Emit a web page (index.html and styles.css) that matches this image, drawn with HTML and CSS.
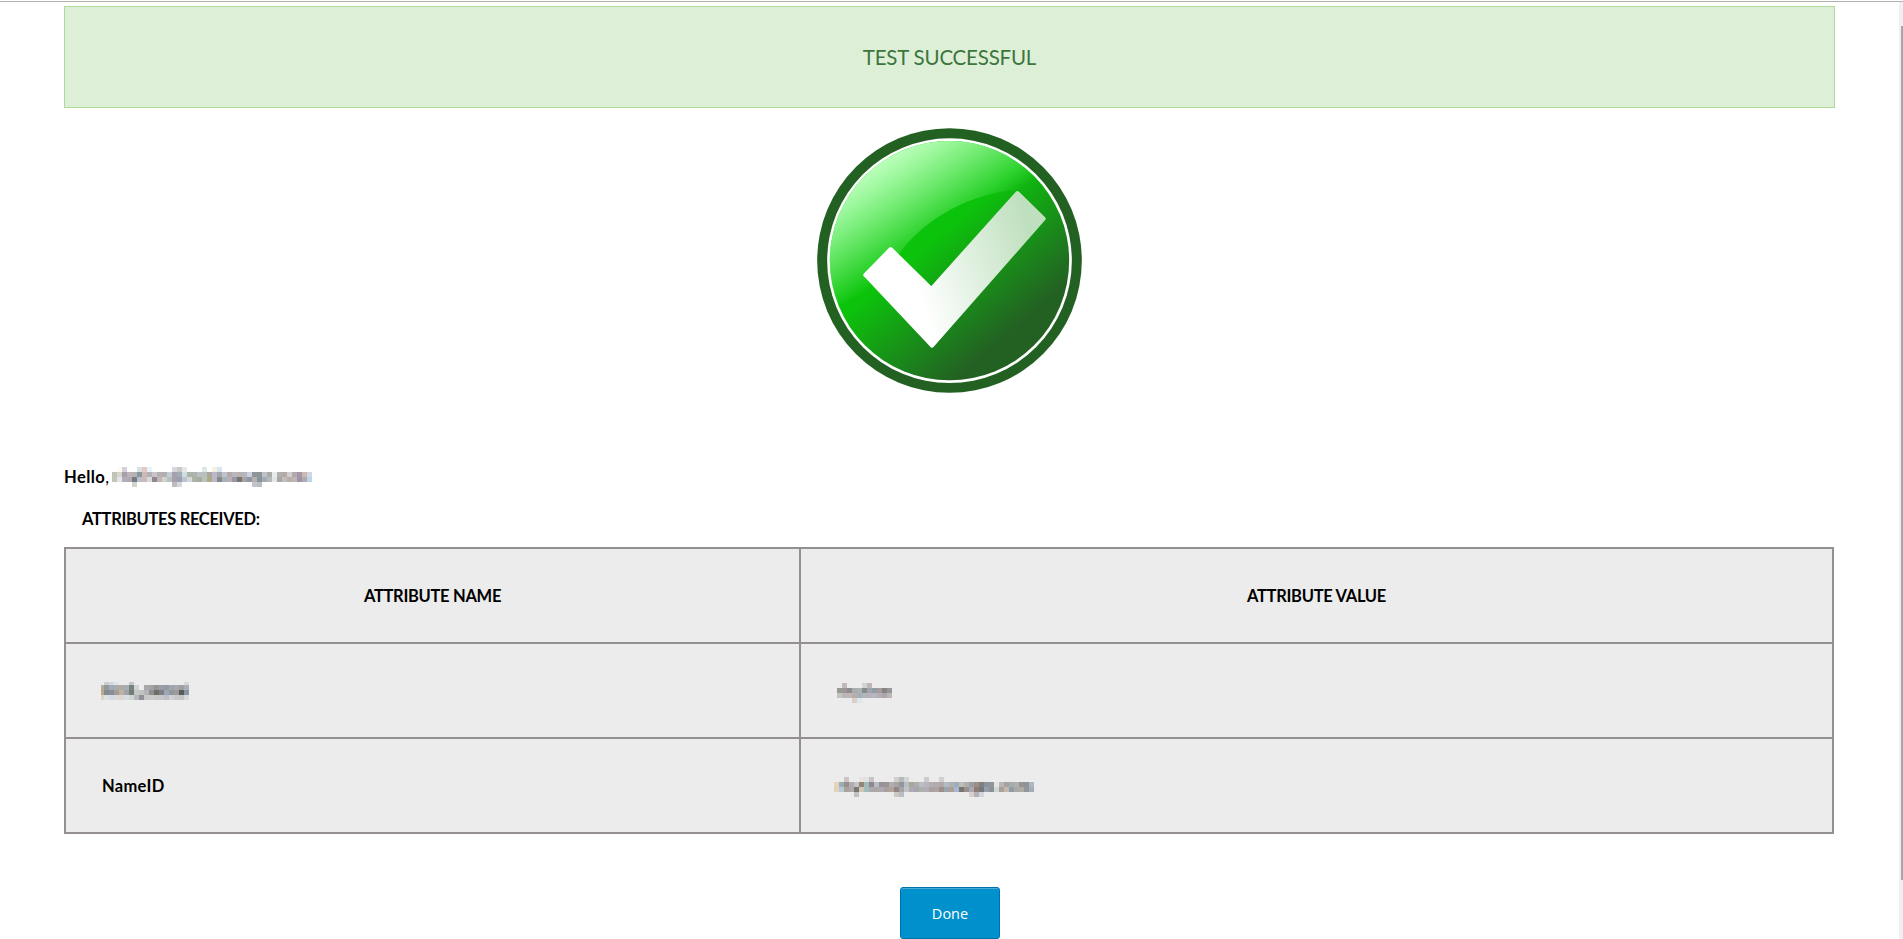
FILE: index.html
```html
<!DOCTYPE html>
<html lang="en">
<head>
<meta charset="utf-8">
<title>Test Configuration</title>
<link rel="stylesheet" href="styles.css">
</head>
<body>
<div class="window">
  <main class="content">
    <div class="banner"><span class="banner-text">TEST SUCCESSFUL</span></div>
    <svg class="badge" viewBox="51 53 795 795" aria-hidden="true">
      <defs>
        <linearGradient id="base" gradientUnits="userSpaceOnUse" x1="300" y1="471" x2="535" y2="746">
          <stop offset="0" stop-color="#0cc30c"/><stop offset="1" stop-color="#236123"/>
        </linearGradient>
        <linearGradient id="gloss" gradientUnits="userSpaceOnUse" x1="200" y1="181" x2="365" y2="430">
          <stop offset="0" stop-color="#fff" stop-opacity=".62"/><stop offset="1" stop-color="#fff" stop-opacity="0"/>
        </linearGradient>
        <linearGradient id="lift" gradientUnits="userSpaceOnUse" x1="200" y1="181" x2="370" y2="438">
          <stop offset="0" stop-color="#50ff50"/><stop offset="1" stop-color="#30f030" stop-opacity="0"/>
        </linearGradient>
        <linearGradient id="tick" gradientUnits="userSpaceOnUse" x1="345" y1="520" x2="700" y2="400">
          <stop offset="0" stop-color="#fff"/><stop offset="1" stop-color="#bfe0bf"/>
        </linearGradient>
        <clipPath id="disc"><circle cx="448.500" cy="451" r="359"/></clipPath>
      </defs>
      <circle cx="448.500" cy="450.500" r="397" fill="#236123"/>
      <circle cx="448.500" cy="451" r="367" fill="#fff"/>
      <circle cx="448.500" cy="451" r="359" fill="url(#base)"/>
      <g clip-path="url(#disc)">
        <path fill="url(#lift)" d="M60 60H760V234C560 224 400 300 305 420C250 490 200 570 60 600Z"/>
        <path fill="url(#gloss)" d="M60 60H760V234C560 224 400 300 305 420C250 490 200 570 60 600Z"/>
      </g>
      <path fill="url(#tick)" stroke="url(#tick)" stroke-width="12" stroke-linejoin="round" d="M196 494L272 416L394 536L652 248L731 325L396 706Z"/>
    </svg>
    <p class="hello"><span class="hello-text"><b>Hello</b>,</span><svg class="mosaic" data-name="user"></svg></p>
    <p class="caption"><span class="caption-text">ATTRIBUTES RECEIVED:</span></p>
    <div class="table">
      <div class="cell head"><span class="head-name">ATTRIBUTE NAME</span></div>
      <div class="cell head"><span class="head-value">ATTRIBUTE VALUE</span></div>
      <div class="cell"><svg class="mosaic key" data-name="first"></svg></div>
      <div class="cell"><svg class="mosaic short" data-name="value"></svg></div>
      <div class="cell"><span class="name-id">NameID</span></div>
      <div class="cell"><svg class="mosaic long" data-name="email"></svg></div>
    </div>
    <button class="done">Done</button>
  </main>
  <div class="scrollbar"><div class="thumb"></div></div>
</div>
<script src="mosaic.js"></script>
</body>
</html>
```
FILE: styles.css
```css
* { box-sizing: border-box; }
body { margin: 0; height: 939px; padding-top: 1px; overflow: hidden; background: #fff; color: #000; font-family: Lato, sans-serif; }
p { margin: 0; }
.window { display: flex; height: 938px; border-top: 1px solid #b1b1b1; }
.content { flex: 1; display: flex; flex-direction: column; padding: 4px 64px 0; }
.banner { flex: none; height: 102px; width: 1771px; display: flex; align-items: center; justify-content: center; background: #deefd8; border: 1px solid #aedb9a; color: #3c763d; font-size: 20.5px; letter-spacing: -0.2px; }
.badge { flex: none; width: 265px; height: 265px; margin: 20px auto 0 753px; }
.hello { flex: none; display: flex; height: 22px; margin-top: 73px; line-height: 22px; font-size: 16.600px; }
.hello-text { width: 48px; letter-spacing: 0.4px; white-space: nowrap; }
.hello .mosaic { margin-top: 1px; }
.caption { flex: none; height: 22px; margin: 20px 0 0 18px; line-height: 22px; font-size: 16.500px; font-weight: 700; letter-spacing: -0.32px; }
.table { flex: none; display: grid; grid-template-columns: 733px 1031px; grid-template-rows: repeat(3, 93px); gap: 2px; width: 1770px; height: 287px; margin-top: 17px; padding: 2px; background: #949090; }
.cell { display: flex; align-items: center; padding-left: 36px; background: #ececec; font-size: 16.500px; font-weight: 700; }
.head { justify-content: center; padding: 0; letter-spacing: -0.3px; }
.name-id { letter-spacing: 0.3px; }
.mosaic { display: block; flex: none; }
.key { margin: -1px 0 0 -3px; clip-path: inset(2px 0 0 2px); }
.short { margin-top: 5px; }
.long { margin: 3px 0 0 -3px; }
.done { flex: none; width: 100px; height: 52px; margin: 53px 0 0 836px; padding: 0; border: 1px solid #0073aa; border-radius: 3px; background: #0091cd; box-shadow: inset 0 1px 0 #4cabd6; color: #fff; font: 14.500px "Open Sans", sans-serif; }
.scrollbar { width: 4px; padding: 24px 0 0 2px; background: #f0f0f0; }
.thumb { height: 854px; background: #a6a6a6; }
```
FILE: mosaic.js
```js
// Each row lists hex colours for five-pixel tiles; "-" leaves a tile empty.
const mosaics = {
  user: [
    "- fffaf0 d5d0dc - - d8e2e3 e4c9c4 e8f3fb - - - - d6d7df c6c8ca e8e8e8 - - - dce7e6 - f6f0dc d6e5f2 - - - - - - - - - - - - - - - - - -",
    "bfc3ba d4d6c8 a69faa bdb5b5 b6b2b6 83999e cdb8b2 b5b0b5 c8c4cc b5aeb2 b4adb0 c5ced0 a7a0b0 a1acb5 d1dce0 acb3a9 acb5ad bbc1c0 b8bfc0 a9a79f bbb6c8 a2a7ad c2c2c8 b3aaad b8b5bf bbb0b2 b2b7bc ced0e0 8e9697 8d9598 bdc3cb ababa8 e8ebeb b3b0ad b3aaaa d2cfd1 b0a9ad a697a8 c9bcaf d0d6e6",
    "c1c6b7 e5e3eb b3acbb b2aaae 777a80 b6c0ca d0b8b4 d5dce0 91858e bdb7b5 d1d2c8 b5bfc7 a7a2aa 9d9eb3 bbc4ce d4dadc adb4a6 a6ada6 bac2b9 b2a983 b5bbcc 8f8584 a1b3bf b7b2b0 9995ab 74786b aaa29e 8b98aa b8b0af 7f969c a9a9b5 b4bab8 e4e6e5 a9a7a2 c5bdbd b4b3a9 c2b4b1 a095a8 b3a9b1 b8d6ec",
    "- - - - d3d3cf - - - - - - - bfbcc1 d4dadf - - - - - - - - - - - - - - c3c3cc bbbec3 - - - - - - - - - -"
  ],
  first: [
    "- c9cfd3 d5d8dc e0e5e5 - - c2c8c9 - - - - - - - - - - d6dadb",
    "b6aa98 90999e a0abb3 a6adaf b2aaa2 a6adb3 768180 ced4d3 - a7a8ac a2a1a4 969595 9a9dab 979ba1 a0a6aa a6a8b0 a1a09e a9b1b7",
    "bda889 808b91 8b8d96 a39d98 beb0a3 9ba5ab 737c79 c2c8c6 c1c3c1 b6b3b6 8c918f 706d65 7e8182 9da8b6 92979d 9c9c9a 565b5b 8994a1",
    "e0d5c4 dce2e3 d5dce1 dbdbdd ddd5d0 d8dde1 d0d5d5 b8b7ba 91909a c8c8c9 cbccca c8c8c8 c6c8cb bfc1c7 d0d2d5 c9c8c8 c5c6c5 d4dade"
  ],
  value: [
    "- c0b8ba - - - d0d5d3 bfb5b6 - - - -",
    "969c91 9c9495 8d8b8b a3adb2 adb0b1 858e8d 9fa5aa 929ba6 a79c9a 858585 98969a",
    "bdc7bd bdb5b7 c0b4b5 b9afa6 a0b0c0 afb6b7 b8b3bb b7b5bf b7acaf aba6ae bdb4b4",
    "- - - d9cfcb e1e7e9 - - - - - -"
  ],
  email: [
    "- - cbc4c6 - - e7e4dd dfe4e1 c8c3cb - - - - d3cecd b4b9b9 d0d6d4 - - - cccccf - - d0d1d0 - - - - - - - - - - - - - - - - - -",
    "e5d4bb 9badb9 9c908e b1adac c3c3c9 918676 a2b9bb 8f8890 b7bdc5 999298 9b9797 acaeb5 ada4a0 8e97a0 b8c0c2 aaa59d aab0aa babdc1 b7b5bf b0b0b4 b3aba8 afa9a7 b3bac0 acb0b7 a0acba bcbdb4 adb0b1 9d9ca3 9c8f89 7d8181 8b949b 8d979c e5e5e5 b7b9af a7a2a1 a4adae b2afaf 969393 8d9697 b0b7c1",
    "e4d2b7 b6cad7 aba19b acabad 7a7570 cec7b4 a0bdbd b1a5ae a8aba4 b1a8b2 a7a19f b5a398 8f8885 a4a4a8 bfc4c6 afaab3 a6a5b0 abb3aa b2adb6 aba19e b0a3a5 9a908b 9aa5ad ac9f97 a9b6d2 78746e 98908d aaa7b2 927c6f 747980 969ea7 8a9497 ced5d2 aaa19b c4baad 929ca8 a9aaa4 afaaa2 929799 a5acb9",
    "- - - - c0c0be - - - - - - - cfc8bf b9bec6 - - - - - - - - - - - - - dcceca b0b4b4 d1d4df - - - - - - - - -"
  ]
};
document.querySelectorAll(".mosaic").forEach((svg) => {
  const rows = mosaics[svg.dataset.name].map((row) => row.split(" "));
  svg.setAttribute("width", rows[1].length * 5);
  svg.setAttribute("height", rows.length * 5);
  svg.setAttribute("shape-rendering", "crispEdges");
  rows.forEach((row, y) => row.forEach((color, x) => {
    if (color === "-") return;
    const tile = document.createElementNS("http://www.w3.org/2000/svg", "rect");
    tile.setAttribute("x", x * 5);
    tile.setAttribute("y", y * 5);
    tile.setAttribute("width", 5);
    tile.setAttribute("height", 5);
    tile.setAttribute("fill", "#" + color);
    svg.appendChild(tile);
  }));
});
```
